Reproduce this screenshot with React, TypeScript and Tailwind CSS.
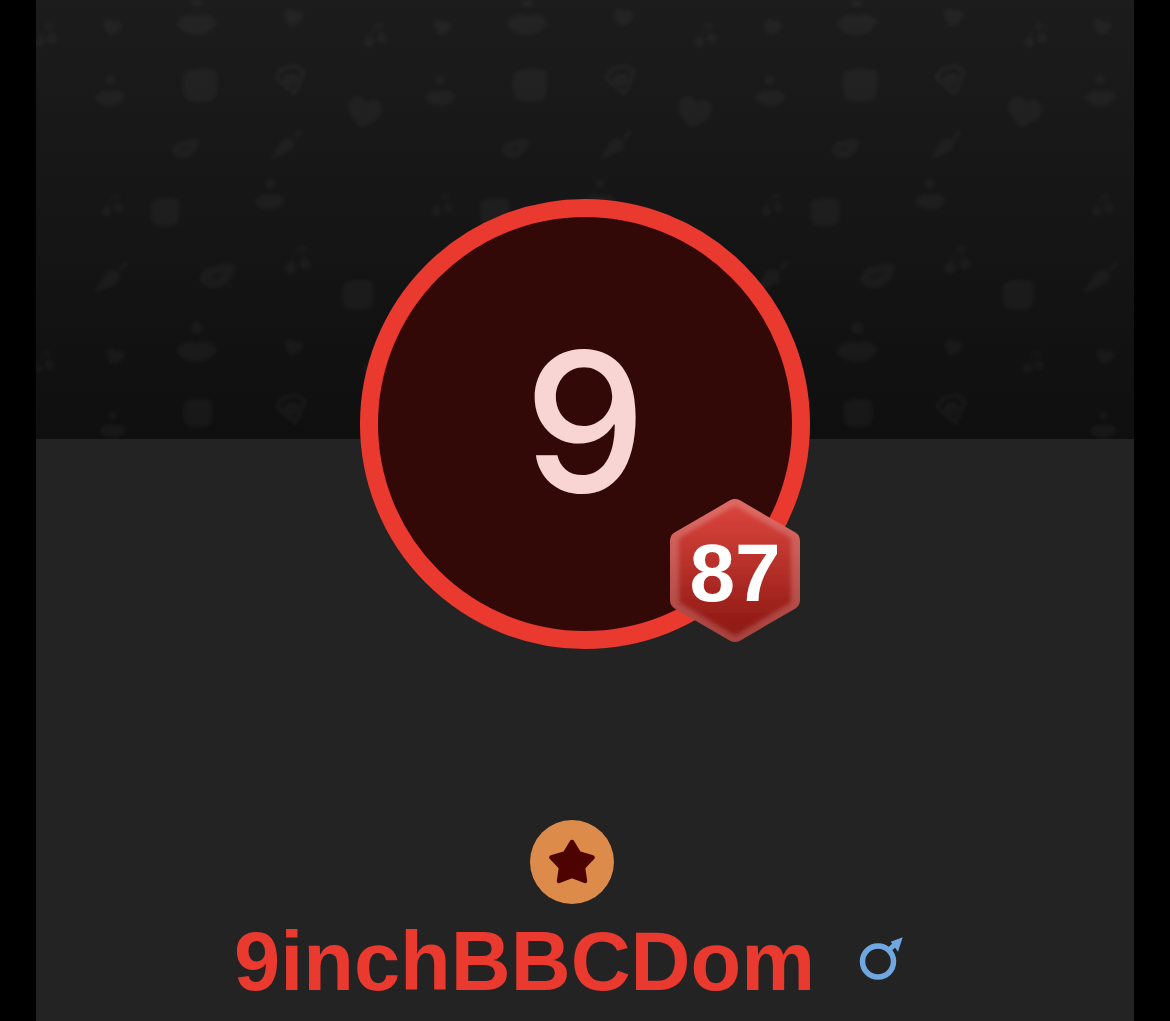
const TILE_WIDTH = 330;

// one 330px wide run of the wallpaper, x is measured from the left edge of the panel
const motifs: { shape: string; x: number; y: number; size: number }[] = [
  { shape: "cherry", x: 9, y: 35, size: 26 },
  { shape: "blob", x: 76, y: 28, size: 20 },
  { shape: "lollipop", x: 161, y: 18, size: 42 },
  { shape: "blob", x: 257, y: 18, size: 22 },
  { shape: "heart", x: 328, y: 113, size: 38 },
  { shape: "lollipop", x: 74, y: 93, size: 32 },
  { shape: "square", x: 164, y: 85, size: 40 },
  { shape: "gem", x: 255, y: 81, size: 30 },
  { shape: "lips", x: 149, y: 148, size: 28 },
  { shape: "carrot", x: 249, y: 145, size: 34 },
  { shape: "lollipop", x: 234, y: 197, size: 32 },
  { shape: "square", x: 129, y: 212, size: 34 },
  { shape: "cherry", x: 76, y: 205, size: 24 },
  { shape: "carrot", x: 74, y: 277, size: 38 },
  { shape: "lips", x: 181, y: 275, size: 36 },
  { shape: "cherry", x: 261, y: 260, size: 30 },
  { shape: "square", x: 322, y: 295, size: 36 },
  { shape: "lollipop", x: 161, y: 345, size: 42 },
  { shape: "blob", x: 79, y: 357, size: 20 },
  { shape: "blob", x: 257, y: 348, size: 20 },
  { shape: "cherry", x: 7, y: 362, size: 24 },
  { shape: "gem", x: 256, y: 410, size: 30 },
  { shape: "square", x: 162, y: 413, size: 34 },
  { shape: "lollipop", x: 77, y: 427, size: 28 },
];

function Motif({ shape }: { shape: string }) {
  if (shape === "heart" || shape === "blob") {
    return (
      <path
        d="M0 9C-6 5-10 1-10-3-10-7-7-9-4.500-9-2.500-9-1-8 0-6 1-8 2.500-9 4.500-9 7-9 10-7 10-3 10 1 6 5 0 9Z"
        transform="rotate(12)"
      />
    );
  }
  if (shape === "gem") {
    return (
      <g fill="none" stroke="#fff" strokeOpacity="0.06" strokeWidth="2" strokeLinejoin="round" transform="rotate(-15)">
        <path d="M-10-5-5-10H6L11-4 0 10Z" />
        <path d="M-4-3C-2-5 0-4 0-2 1-4 4-4 4-2 4 0 2 1 0 3-2 1-4 0-4-3Z" />
      </g>
    );
  }
  if (shape === "cherry") {
    return (
      <g>
        <circle cx="-5" cy="6" r="4.500" />
        <circle cx="6" cy="3" r="4.500" />
        <path d="M-5 2 1-9 6-1" fill="none" stroke="#fff" strokeOpacity="0.035" strokeWidth="1.500" />
        <path d="M1-9C4-11 8-10 9-7 5-6 3-7 1-9Z" />
      </g>
    );
  }
  if (shape === "lips") {
    return <path d="M-11 3C-9-3-5-7-1-5 2-8 9-8 11-6 11 0 7 7 0 8-5 9-9 6-11 3ZM-5 2C-2 3 2 1 5-2 2-1-2 0-5 2Z" fillRule="evenodd" />;
  }
  if (shape === "lollipop") {
    return (
      <g>
        <circle cx="0" cy="-9" r="3.500" />
        <path d="M-11 3C-8-2-3-3 0-1 4-3 8-2 11 2 9 7 4 9 0 9-5 9-9 7-11 3Z" />
      </g>
    );
  }
  if (shape === "carrot") {
    return <path d="M-10 10-3-2C-1-5 3-5 5-3 7-1 6 3 3 4ZM5-5 9-10 11-8 7-3Z" />;
  }
  return <path d="M-9-7C-3-10 4-10 9-8 10-2 10 3 8 8 3 10-3 10-8 8-10 3-10-2-9-7Z" />;
}

function Wallpaper() {
  const repeats = [0, 1, 2, 3];
  return (
    <svg className="block h-full w-full blur-[2px]" viewBox="0 0 1098 439">
      <g fill="#fff" fillOpacity="0.035">
        {repeats.map((r) =>
          motifs.map((m, i) => (
            <g
              key={`${r}-${i}`}
              transform={`translate(${m.x + r * TILE_WIDTH} ${m.y}) scale(${m.size / 22})`}
            >
              <Motif shape={m.shape} />
            </g>
          ))
        )}
      </g>
    </svg>
  );
}

function LevelBadge() {
  return (
    <div className="absolute left-[308px] top-[298px] flex h-[147px] w-[134px] items-center justify-center pt-[5px]">
      <svg className="absolute inset-0" width="134" height="147" viewBox="0 0 134 147">
        <defs>
          <linearGradient id="hex" x1="0" y1="0" x2="0" y2="1">
            <stop offset="0" stopColor="#d8433c" />
            <stop offset="1" stopColor="#8f1a15" />
          </linearGradient>
          <linearGradient id="hexEdge" x1="0" y1="0" x2="0" y2="1">
            <stop offset="0" stopColor="#dc6a64" />
            <stop offset="1" stopColor="#a8443f" />
          </linearGradient>
          <filter id="soft" x="-10%" y="-10%" width="120%" height="120%">
            <feGaussianBlur stdDeviation="2" />
          </filter>
        </defs>
        <polygon
          points="67,12 122,44 122,103 67,135 12,103 12,44"
          fill="url(#hexEdge)"
          stroke="url(#hexEdge)"
          strokeWidth="20"
          strokeLinejoin="round"
        />
        <polygon
          points="67,14 118,44 118,103 67,133 16,103 16,44"
          fill="url(#hex)"
          stroke="url(#hex)"
          strokeWidth="10"
          strokeLinejoin="round"
          filter="url(#soft)"
        />
      </svg>
      <span className="relative font-['Liberation_Sans',sans-serif] text-[82px] font-bold leading-none text-white">
        87
      </span>
    </div>
  );
}

export default function App() {
  return (
    <div className="flex h-[1021px] w-full justify-center overflow-hidden bg-black">
      <div className="flex w-[1098px] flex-col items-center bg-[#232323]">
        <div className="h-[439px] w-full shrink-0 bg-gradient-to-b from-[#1c1c1c] to-[#0f0f0f]">
          <Wallpaper />
        </div>

        <div className="relative -mt-[240px] flex h-[450px] w-[450px] shrink-0 items-center justify-center rounded-full border-[18px] border-[#ea3a30] bg-[#330908] pb-[4px]">
          <span className="font-['Inter',sans-serif] text-[194px] font-medium leading-none text-[#f8d5d2]">
            9
          </span>
        </div>
        <div className="relative -mt-[450px] h-[450px] w-[450px] shrink-0">
          <LevelBadge />
        </div>

        <div className="mt-[171px] -ml-[26px] flex h-[84px] w-[84px] shrink-0 items-center justify-center rounded-full bg-[#dc8b4b]">
          <svg width="48" height="46" viewBox="0 0 48 46">
            <polygon
              points="24,3 31,14.500 44.500,18.500 35,28.500 37,42 24,37 11,42 13,28.500 3.500,18.500 17,14.500"
              fill="#4d0400"
              stroke="#4d0400"
              strokeWidth="4.500"
              strokeLinejoin="round"
            />
          </svg>
        </div>

        <div className="mt-[16px] flex items-center">
          <span className="font-['Liberation_Sans',sans-serif] text-[83px] font-bold leading-[84px] text-[#ea3a30]">
            9inchBBCDom
          </span>
          <svg className="ml-[41px] mr-[32px] overflow-visible" width="48" height="48" viewBox="0 0 48 48">
            <circle cx="22" cy="23.500" r="15.500" fill="none" stroke="#6fa8e0" strokeWidth="5.500" />
            <path d="M33 12 42 3.500" stroke="#6fa8e0" strokeWidth="5" fill="none" />
            <polygon points="34.700,3.700 46.700,-0.700 42,13.700" fill="#6fa8e0" />
          </svg>
        </div>
      </div>
    </div>
  );
}
